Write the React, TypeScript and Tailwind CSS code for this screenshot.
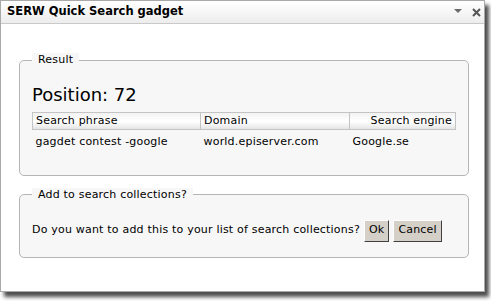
import React from 'react';

// --- QUICK SEARCH GADGET ---
const font = { fontFamily: '"DejaVu Sans", Verdana, sans-serif' };

const App = () => {
  return (
    <div className="w-[491px] h-[301px] bg-white" style={font}>
      <div className="w-[485px] h-[292px] border border-[#a9a9a9] bg-white shadow-[4px_5px_4px_rgba(0,0,0,0.7)] flex flex-col">
        {/* Title bar */}
        <div className="h-[23px] shrink-0 border-b border-[#c9c9c9] bg-gradient-to-b from-white to-[#ededed] flex items-center justify-between pl-[6px] pr-[3px]">
          <span className="text-[11.5px] font-bold text-black">SERW Quick Search gadget</span>
          <div className="flex items-center gap-[9px]">
            <svg width="9" height="6" viewBox="0 0 9 6">
              <path d="M0 0 H8 L4 4 Z" fill="#6b6b6b" />
            </svg>
            <svg width="9" height="9" viewBox="0 0 9 9">
              <path d="M1 1 L8 8 M8 1 L1 8" stroke="#555" strokeWidth="2" />
            </svg>
          </div>
        </div>

        {/* Body */}
        <div className="pl-[18px] pr-[15px] pt-[29px] text-[11px] tracking-[0.2px] text-black">
          {/* Result */}
          <fieldset className="border border-[#b5b5b5] rounded-[5px] bg-[#f7f7f7] px-[12px] pr-[11px] pb-[21px]">
            <legend className="px-[6px] bg-[#f7f7f7] leading-[14px]">Result</legend>
            <p className="mt-[17px] text-[18px] leading-[22px] tracking-normal">Position: 72</p>
            <table className="mt-[6px] w-[424px] border-collapse text-left">
              <thead>
                <tr className="bg-gradient-to-b from-[#f2f2f2] via-white to-[#e2e2e2]">
                  <th className="w-[168px] h-[17px] border border-[#c4c4c4] px-[3px] font-normal leading-[14px]">Search phrase</th>
                  <th className="w-[149px] border border-[#c4c4c4] px-[3px] font-normal leading-[14px]">Domain</th>
                  <th className="border border-[#c4c4c4] px-[3px] font-normal leading-[14px] text-right">Search engine</th>
                </tr>
              </thead>
              <tbody>
                <tr>
                  <td className="h-[24px] px-[3px]">gagdet contest -google</td>
                  <td className="px-[3px]">world.episerver.com</td>
                  <td className="px-[3px]">Google.se</td>
                </tr>
              </tbody>
            </table>
          </fieldset>

          {/* Add to collections */}
          <fieldset className="mt-[12px] border border-[#b5b5b5] rounded-[5px] bg-[#f7f7f7] px-[12px] pb-[15px]">
            <legend className="px-[6px] bg-[#f7f7f7] leading-[14px]">Add to search collections?</legend>
            <div className="mt-[18px] flex items-center gap-[4px]">
              <span>Do you want to add this to your list of search collections?</span>
              <button className="h-[22px] px-[4px] bg-[#d4d0c8] border border-t-white border-l-white border-r-[#404040] border-b-[#404040]">Ok</button>
              <button className="h-[22px] px-[4px] bg-[#d4d0c8] border border-t-white border-l-white border-r-[#404040] border-b-[#404040]">Cancel</button>
            </div>
          </fieldset>
        </div>
      </div>
    </div>
  );
};

export default App;
